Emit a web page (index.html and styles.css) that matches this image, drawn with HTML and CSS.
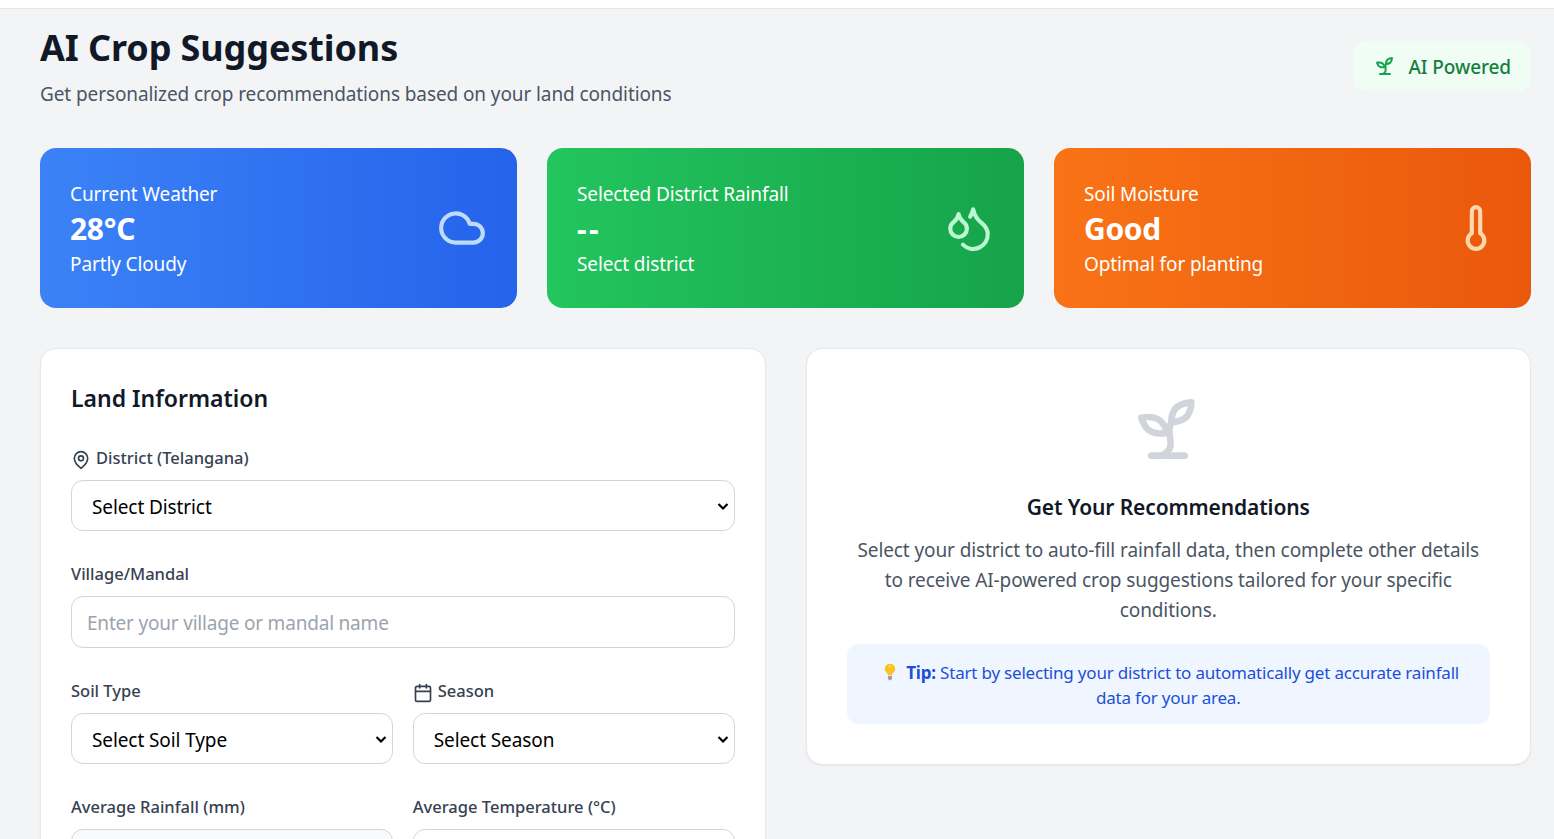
FILE: index.html
```html
<!DOCTYPE html>
<html lang="en">
<head>
<meta charset="utf-8">
<title>AI Crop Suggestions</title>
<link rel="stylesheet" href="styles.css">
</head>
<body>
<div class="topbar"></div>
<main class="main">
  <header class="head">
    <div>
      <h1 class="title">AI Crop Suggestions</h1>
      <p class="subtitle">Get personalized crop recommendations based on your land conditions</p>
    </div>
    <div class="badge">
      <svg class="ico ico-24" viewBox="0 0 24 24"><path d="M7 20h10"/><path d="M10 20c5.5-2.5.8-6.4 3-10"/><path d="M9.5 9.4c1.1.8 1.8 2.2 2.3 3.7-2 .4-3.5.4-4.8-.3-1.2-.6-2.3-1.9-3-4.2 2.8-.5 4.4 0 5.5.8z"/><path d="M14.1 6a7 7 0 0 0-1.1 4c1.9-.1 3.3-.6 4.3-1.4 1-1 1.6-2.3 1.7-4.6-2.7.1-4 1-4.9 2z"/></svg>
      <span>AI Powered</span>
    </div>
  </header>

  <section class="stats">
    <div class="stat stat-blue">
      <div class="stat-text">
        <p class="stat-label">Current Weather</p>
        <p class="stat-value">28°C</p>
        <p class="stat-note">Partly Cloudy</p>
      </div>
      <svg class="ico ico-50 tint-blue" viewBox="0 0 24 24"><path d="M17.5 19H9a7 7 0 1 1 6.71-9h1.79a4.5 4.5 0 1 1 0 9Z"/></svg>
    </div>
    <div class="stat stat-green">
      <div class="stat-text">
        <p class="stat-label">Selected District Rainfall</p>
        <p class="stat-value stat-dash">--</p>
        <p class="stat-note">Select district</p>
      </div>
      <svg class="ico ico-50 tint-green" viewBox="0 0 24 24"><path d="M7 16.3c2.2 0 4-1.83 4-4.05 0-1.16-.57-2.26-1.71-3.19S7.29 6.75 7 5.3c-.29 1.45-1.14 2.84-2.29 3.76S3 11.1 3 12.25c0 2.22 1.8 4.05 4 4.05z"/><path d="M12.56 6.6A10.97 10.97 0 0 0 14 3.02c.5 2.5 2 4.9 4 6.5s3 3.5 3 5.5a6.98 6.98 0 0 1-11.91 4.97"/></svg>
    </div>
    <div class="stat stat-orange">
      <div class="stat-text">
        <p class="stat-label">Soil Moisture</p>
        <p class="stat-value">Good</p>
        <p class="stat-note">Optimal for planting</p>
      </div>
      <svg class="ico ico-50 tint-orange" viewBox="0 0 24 24"><path d="M14 4v10.54a4 4 0 1 1-4 0V4a2 2 0 0 1 4 0Z"/></svg>
    </div>
  </section>

  <section class="columns">
    <form class="panel form">
      <h2 class="panel-title">Land Information</h2>
      <div class="field">
        <label class="label">
          <svg class="ico ico-20" viewBox="0 0 24 24"><path d="M20 10c0 6-8 12-8 12s-8-6-8-12a8 8 0 0 1 16 0Z"/><circle cx="12" cy="10" r="3"/></svg>
          District (Telangana)
        </label>
        <select class="control select"><option>Select District</option></select>
      </div>
      <div class="field">
        <label class="label">Village/Mandal</label>
        <input class="control input" type="text" placeholder="Enter your village or mandal name">
      </div>
      <div class="pair">
        <div class="field">
          <label class="label">Soil Type</label>
          <select class="control select"><option>Select Soil Type</option></select>
        </div>
        <div class="field">
          <label class="label">
            <svg class="ico ico-20" viewBox="0 0 24 24"><rect x="3" y="4" width="18" height="18" rx="2"/><path d="M16 2v4"/><path d="M8 2v4"/><path d="M3 10h18"/></svg>
            Season
          </label>
          <select class="control select"><option>Select Season</option></select>
        </div>
      </div>
      <div class="pair">
        <div class="field">
          <label class="label">Average Rainfall (mm)</label>
          <input class="control input input-muted" type="text">
        </div>
        <div class="field">
          <label class="label">Average Temperature (°C)</label>
          <input class="control input" type="text">
        </div>
      </div>
    </form>

    <aside class="panel result">
      <svg class="ico ico-80" viewBox="0 0 24 24"><path d="M7 20h10"/><path d="M10 20c5.5-2.5.8-6.4 3-10"/><path d="M9.5 9.4c1.1.8 1.8 2.2 2.3 3.7-2 .4-3.5.4-4.8-.3-1.2-.6-2.3-1.9-3-4.2 2.8-.5 4.4 0 5.5.8z"/><path d="M14.1 6a7 7 0 0 0-1.1 4c1.9-.1 3.3-.6 4.3-1.4 1-1 1.6-2.3 1.7-4.6-2.7.1-4 1-4.9 2z"/></svg>
      <h3 class="result-title">Get Your Recommendations</h3>
      <p class="result-text">Select your district to auto-fill rainfall data, then complete other details to receive AI-powered crop suggestions tailored for your specific conditions.</p>
      <div class="tip">
        <svg class="bulb" viewBox="0 0 16 24"><path class="bulb-glass" d="M8 1a7 7 0 0 0-4 12.700c.9.700 1.200 1.500 1.300 2.300h5.400c.1-.8.400-1.600 1.300-2.300A7 7 0 0 0 8 1Z"/><path class="bulb-shine" d="M5.500 4.500a4 4 0 0 1 5 0 4.500 3.500 0 0 1-5 0Z"/><path class="bulb-base" d="M5.300 17h5.400v4l-1.500 2H6.800l-1.500-2Z"/></svg>
        <strong>Tip:</strong> Start by selecting your district to automatically get accurate rainfall data for your area.
      </div>
    </aside>
  </section>
</main>
</body>
</html>
```
FILE: styles.css
```css
* { box-sizing: border-box; }
html, body { margin: 0; height: 100%; overflow: hidden; }
body { background: #f3f4f6; font-family: "Noto Sans", "Open Sans", sans-serif; color: #111827; }
p, h1, h2, h3 { margin: 0; }

.topbar { height: 9px; background: #fff; border-bottom: 1px solid #e5e7eb; }
.main { padding: 14px 23px 0 40px; }

.ico { fill: none; stroke: currentColor; stroke-width: 2; stroke-linecap: round; stroke-linejoin: round; flex: none; }
.ico-20 { width: 20px; height: 20px; margin-top: 3px; }
.ico-24 { width: 24px; height: 24px; }
.ico-50 { width: 50px; height: 50px; }
.ico-80 { width: 80px; height: 80px; color: #d1d5db; }

.head { display: flex; justify-content: space-between; align-items: flex-start; height: 125px; }
.title { font-size: 36px; line-height: 50px; font-weight: 700; letter-spacing: -0.1px; }
.subtitle { margin-top: 7px; font-size: 19px; line-height: 28px; color: #4b5563; letter-spacing: -0.1px; }
.badge { margin-top: 18px; display: flex; align-items: center; gap: 11px; height: 50px; padding: 0 20px; background: #f0fdf4; border-radius: 12px; color: #16a34a; }
.badge span { font-size: 19px; font-weight: 500; color: #15803d; letter-spacing: -0.1px; padding-top: 2px; }

.stats { display: grid; grid-template-columns: repeat(3, 1fr); gap: 30px; }
.stat { height: 160px; border-radius: 16px; padding: 0 30px; display: flex; justify-content: space-between; align-items: center; color: #fff; }
.stat-blue { background: linear-gradient(90deg, #3b82f6, #2563eb); }
.stat-green { background: linear-gradient(90deg, #22c55e, #16a34a); }
.stat-orange { background: linear-gradient(90deg, #f97316, #ea580c); }
.stat-text { padding-top: 2px; }
.stat-label, .stat-note { font-size: 19px; line-height: 28px; letter-spacing: -0.12px; }
.stat-value { font-size: 30px; line-height: 42px; font-weight: 700; letter-spacing: -0.3px; }
.stat-dash { letter-spacing: 2.500px; }
.tint-blue { color: #bfdbfe; }
.tint-green { color: #bbf7d0; }
.tint-orange { color: #fed7aa; }

.columns { margin-top: 40px; display: grid; grid-template-columns: 1fr 1fr; gap: 40px; align-items: start; }
.panel { background: #fff; border: 1px solid #e5e7eb; border-radius: 16px; box-shadow: 0 1px 2px rgba(0, 0, 0, .05); }

.form { padding: 31px 30px 30px; }
.panel-title { font-size: 23px; line-height: 36px; font-weight: 600; margin-bottom: 30px; }
.field { margin-bottom: 31px; min-width: 0; }
.pair { display: grid; grid-template-columns: 1fr 1fr; gap: 20px; }
.label { display: flex; align-items: center; gap: 5px; font-size: 16.500px; line-height: 24px; font-weight: 500; color: #374151; margin-bottom: 10px; }
.control { display: block; width: 100%; border: 1px solid #d1d5db; border-radius: 12px; background: #fff; font-family: inherit; color: #000; }
.select {
  appearance: none;
  height: 51px;
  padding: 2px 24px 0 20px;
  font-size: 19px;
  letter-spacing: -0.1px;
  background: #fff url("data:image/svg+xml,%3Csvg xmlns='http://www.w3.org/2000/svg' width='16' height='16' viewBox='0 0 16 16'%3E%3Cpath d='M3.500 6 8 10.500 12.500 6' fill='none' stroke='%23000' stroke-width='2.200'/%3E%3C/svg%3E") no-repeat right 3px center;
}
.input { height: 52px; padding: 2px 15px 0; font-size: 19px; letter-spacing: -0.2px; }
.input::placeholder { color: #9ca3af; opacity: 1; }
.input-muted { background: #f9fafb; }

.result { padding: 40px 40px 40px; display: flex; flex-direction: column; align-items: center; text-align: center; }
.result-title { margin-top: 23px; font-size: 21px; line-height: 30px; font-weight: 600; letter-spacing: -0.12px; }
.result-text { margin-top: 13px; font-size: 19px; line-height: 30px; color: #4b5563; letter-spacing: -0.1px; }
.tip { margin-top: 19px; width: 100%; padding: 16px 20px 14px; background: #eff6ff; border-radius: 12px; font-size: 17px; line-height: 25px; color: #1d4ed8; letter-spacing: -0.2px; }
.tip strong { font-weight: 700; }
.bulb { width: 12px; height: 18px; margin: 0 6.500px 0 6px; vertical-align: -2px; }
.bulb-glass { fill: #fcc21b; }
.bulb-shine { fill: #fde68a; }
.bulb-base { fill: #a79ba7; }
```
